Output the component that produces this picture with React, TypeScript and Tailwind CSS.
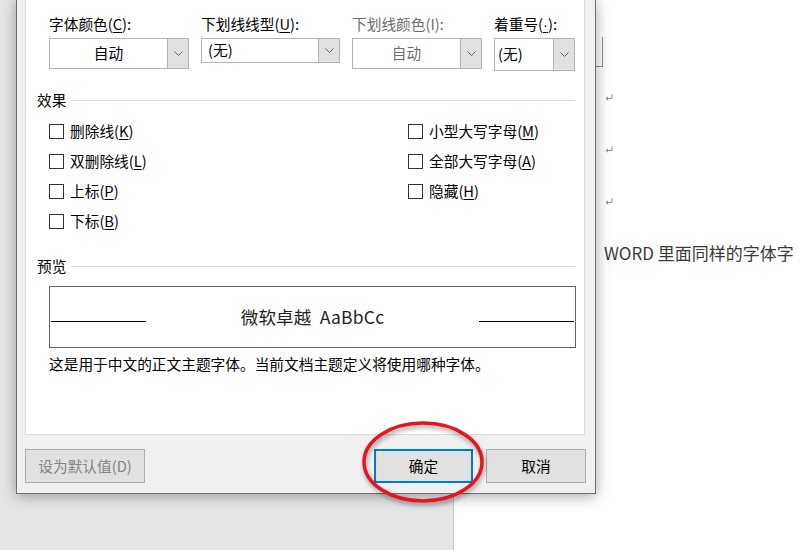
const FONT = { fontFamily: "'Noto Sans CJK SC', 'Microsoft YaHei', sans-serif" };

function Chevron() {
  return (
    <svg width="9" height="5" viewBox="0 0 9 5" className="block">
      <polyline points="0.5,0.5 4.5,4.5 8.5,0.5" fill="none" stroke="#606060" strokeWidth="1" />
    </svg>
  );
}

function Select({
  w,
  h,
  text,
  center,
  disabled,
  pl,
}: {
  w: string;
  h: string;
  text: string;
  center?: boolean;
  disabled?: boolean;
  pl?: string;
}) {
  return (
    <div className={`${w} ${h} flex border border-[#b4b4b4] bg-white`}>
      <div
        className={`flex-1 flex items-center ${center ? "justify-center" : pl} ${
          disabled ? "text-[#6d6d6d]" : "text-black"
        }`}
      >
        {text}
      </div>
      <div className="w-[21px] flex items-center justify-center bg-[#e1e1e1] border-l border-[#b4b4b4]">
        <Chevron />
      </div>
    </div>
  );
}

function Check({ label, k }: { label: string; k: string }) {
  return (
    <div className="h-[30px] flex items-center gap-[6px]">
      <div className="w-[15px] h-[15px] border border-[#333] bg-white" />
      <span>
        {label}(<u className="underline-offset-2">{k}</u>)
      </span>
    </div>
  );
}

function ReturnMark() {
  return (
    <svg width="8" height="7" viewBox="0 0 8 7" className="block">
      <path d="M7 0.5 V4.5 H1.5" fill="none" stroke="#8a8a8a" strokeWidth="1" />
      <path d="M3 2.8 L1 4.5 L3 6.2" fill="none" stroke="#8a8a8a" strokeWidth="1" />
    </svg>
  );
}

export default function App() {
  return (
    <div className="relative w-[800px] h-[550px] overflow-hidden flex bg-white" style={FONT}>
      {/* word background */}
      <div className="w-[454px] shrink-0 h-full bg-[#e6e6e6] border-r border-[#c8c8c8]" />
      <div className="flex-1 min-w-0 h-full bg-white pl-[142px] flex flex-col overflow-hidden">
        <div className="mt-[37px] w-[7px] h-[30px] border-r border-b border-[#8f8f8f]" />
        <div className="ml-[9px] mt-[27px] h-[6px]">
          <ReturnMark />
        </div>
        <div className="ml-[9px] mt-[46px] h-[6px]">
          <ReturnMark />
        </div>
        <div className="ml-[9px] mt-[46px] h-[6px]">
          <ReturnMark />
        </div>
        <div className="ml-[8px] mt-[37px] text-[17px] leading-[24px] text-[#3a3a3a] whitespace-nowrap">
          WORD 里面同样的字体字
        </div>
      </div>

      {/* dialog */}
      <div className="absolute left-[16px] top-0 w-[580px] h-[494px] bg-[#f0f0f0] border-x border-b border-[#6e6e6e] shadow-[0_2px_14px_rgba(0,0,0,0.35)] text-[14.7px] text-black">
        <div className="ml-[8px] w-[560px] h-[435px] bg-white border-x border-b border-[#dadada] flex flex-col">
          {/* font colour / underline row */}
          <div className="pl-[23px] pt-[14px] flex items-start gap-3">
            <div className="flex flex-col gap-[4px]">
              <div className="h-[20px] leading-[20px]">
                字体颜色(<u className="underline-offset-2">C</u>):
              </div>
              <Select w="w-[140px]" h="h-[31px]" text="自动" center />
            </div>
            <div className="flex flex-col gap-[4px]">
              <div className="h-[20px] leading-[20px]">
                下划线线型(<u className="underline-offset-2">U</u>):
              </div>
              <Select w="w-[139px]" h="h-[25px]" text="(无)" pl="pl-[6px]" />
            </div>
            <div className="flex flex-col gap-[4px]">
              <div className="h-[20px] leading-[20px] text-[#6d6d6d]">下划线颜色(I):</div>
              <Select w="w-[130px]" h="h-[31px]" text="自动" center disabled />
            </div>
            <div className="flex flex-col gap-[4px]">
              <div className="h-[20px] leading-[20px]">
                着重号(
                <u className="underline-offset-2 font-['Liberation_Sans',sans-serif]">·</u>):
              </div>
              <Select w="w-[81px]" h="h-[33px]" text="(无)" pl="pl-[3px]" />
            </div>
          </div>

          {/* effects */}
          <div className="mt-[19px] pl-[11px] pr-[9px] h-[20px] flex items-center gap-[5px]">
            <span className="leading-[20px]">效果</span>
            <div className="flex-1 h-px bg-[#dcdcdc]" />
          </div>
          <div className="mt-[6px] pl-[23px] flex">
            <div className="w-[359px] flex flex-col">
              <Check label="删除线" k="K" />
              <Check label="双删除线" k="L" />
              <Check label="上标" k="P" />
              <Check label="下标" k="B" />
            </div>
            <div className="flex flex-col">
              <Check label="小型大写字母" k="M" />
              <Check label="全部大写字母" k="A" />
              <Check label="隐藏" k="H" />
            </div>
          </div>

          {/* preview */}
          <div className="mt-[20px] pl-[11px] pr-[9px] h-[20px] flex items-center gap-[5px]">
            <span className="leading-[20px]">预览</span>
            <div className="flex-1 h-px bg-[#dcdcdc]" />
          </div>
          <div className="mt-[10px] ml-[23px] w-[527px] h-[62px] border border-[#646464] flex items-center px-px">
            <div className="w-[95px] h-px bg-black mt-[8px]" />
            <div className="flex-1 text-center text-[17.5px] text-[#222] tracking-[0.2px]">
              微软卓越&nbsp; AaBbCc
            </div>
            <div className="w-[95px] h-px bg-black mt-[8px]" />
          </div>
          <div className="mt-[6px] ml-[23px] leading-[20px]">
            这是用于中文的正文主题字体。当前文档主题定义将使用哪种字体。
          </div>
        </div>

        {/* buttons */}
        <div className="ml-[8px] w-[561px] mt-[14px] flex justify-between">
          <div className="w-[120px] h-[34px] flex items-center justify-center bg-[#e1e1e1] border border-[#adadad] text-[#838383]">
            设为默认值(D)
          </div>
          <div className="flex gap-[13px]">
            <div className="w-[99px] h-[34px] flex items-center justify-center bg-[#e1e1e1] border-2 border-[#0078d7]">
              确定
            </div>
            <div className="w-[100px] h-[34px] flex items-center justify-center bg-[#e1e1e1] border border-[#adadad]">
              取消
            </div>
          </div>
        </div>
      </div>

      {/* red annotation */}
      <svg
        className="absolute left-[358px] top-[417px]"
        width="132"
        height="92"
        viewBox="0 0 132 92"
        style={{ filter: "drop-shadow(1px 3px 2px rgba(0,0,0,0.35))" }}
      >
        <ellipse cx="65" cy="45" rx="59" ry="39" fill="none" stroke="#e8141a" strokeWidth="3.5" />
      </svg>
    </div>
  );
}
